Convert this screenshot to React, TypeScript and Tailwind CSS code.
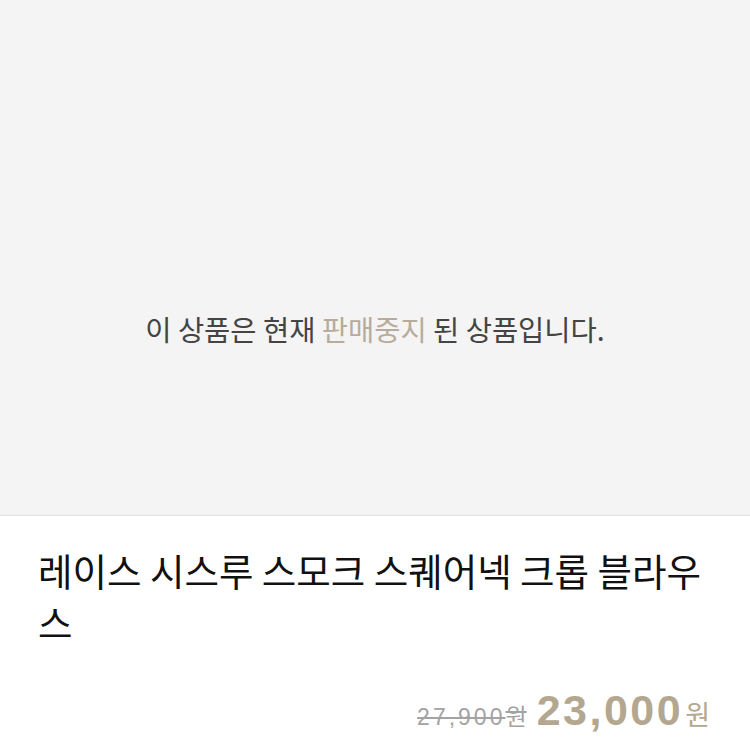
import React from "react";

export default function App() {
  return (
    <div className="w-[750px] h-[750px] bg-white overflow-hidden" style={{ fontFamily: '"Noto Sans CJK KR", "Noto Sans", sans-serif' }}>
      <div className="h-[516px] bg-[#f4f4f4] border-b border-[#e2e2e2] flex items-center justify-center">
        <p className="text-[28.5px] text-[#444444] mt-[144px]">
          이 상품은 현재 <span className="text-[#b8ab9b]">판매중지</span> 된 상품입니다.
        </p>
      </div>
      <div className="px-[38px] pt-[28px]">
        <h1 className="text-[37.5px] leading-[52px] text-[#111111] font-normal">
          레이스 시스루 스모크 스퀘어넥 크롭 블라우스
        </h1>
        <div className="flex items-baseline justify-end mt-[30px] pr-[2px]">
          <span className="text-[23px] text-[#a3a3a3] line-through tracking-[3px] mr-[10px]" style={{ fontFamily: '"Liberation Sans", sans-serif' }}>27,900<span className="tracking-normal" style={{ fontFamily: '"Noto Sans CJK KR", sans-serif' }}>원</span></span>
          <span className="text-[43px] font-bold text-[#b3a790] tracking-[2.5px]" style={{ fontFamily: '"Liberation Sans", sans-serif' }}>23,000</span>
          <span className="text-[27px] text-[#b3a790] ml-[2px]">원</span>
        </div>
      </div>
    </div>
  );
}
